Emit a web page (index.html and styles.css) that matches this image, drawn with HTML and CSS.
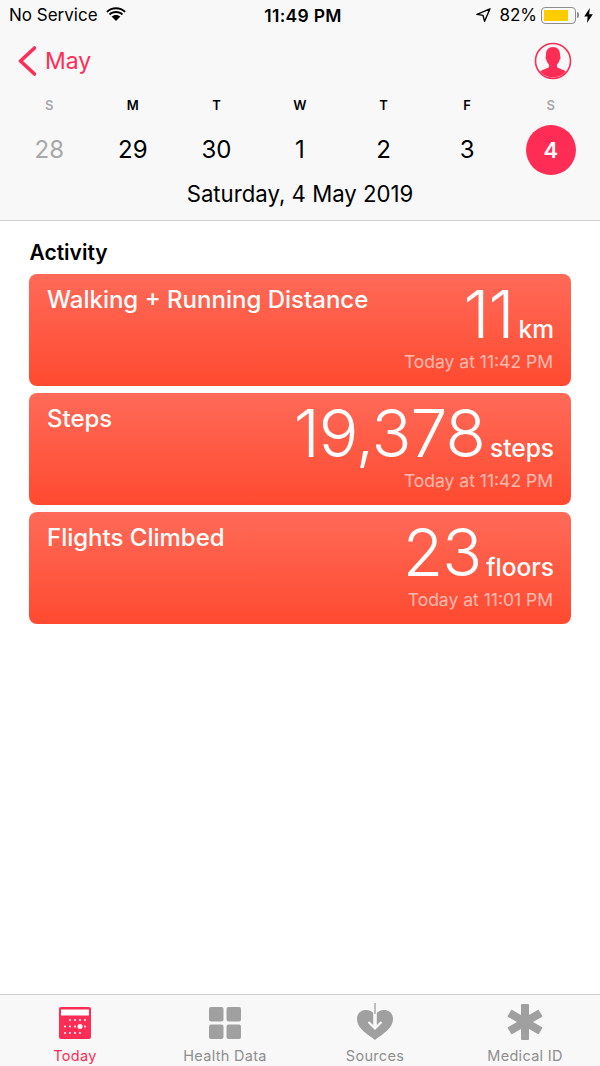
FILE: index.html
```html
<!DOCTYPE html>
<html>
<head>
    <title>Health Today</title>
    <link rel="stylesheet" href="styles.css">
</head>
<body>
    <div class="page">
        <header class="top">
            <div class="status">
                <div class="status-left">
                    <span>No Service</span>
                    <svg class="wifi" width="20" height="14" viewBox="0 0 20 14">
                        <path d="M10 2.200c3.300 0 6.300 1.200 8.600 3.300l1.100-1.300C17 1.700 13.700.3 10 .3S3 1.700.3 4.200l1.100 1.300C3.700 3.400 6.700 2.200 10 2.200z"/>
                        <path d="M10 6c2.300 0 4.300.8 5.900 2.200l1.200-1.400C15.200 5.100 12.700 4.100 10 4.100s-5.200 1-7.100 2.700l1.200 1.400C5.700 6.800 7.700 6 10 6z"/>
                        <path d="M10 7.900c-1.700 0-3.200.6-4.400 1.600L10 14l4.400-4.500c-1.200-1-2.700-1.600-4.400-1.600z"/>
                    </svg>
                </div>
                <div class="clock">11:49 PM</div>
                <div class="status-right">
                    <svg class="arrow" width="15" height="14" viewBox="0 0 15 14">
                        <path d="M14 .8 1 6.400l6 1 1.600 5.900z" fill="none" stroke="#000" stroke-width="1.400" stroke-linejoin="round"/>
                    </svg>
                    <span class="pct">82%</span>
                    <div class="battery"><div class="battery-fill"></div></div>
                    <div class="battery-cap"></div>
                    <svg class="bolt" width="9" height="15" viewBox="0 0 8 14">
                        <path d="M5.200 0 0 8h3.200L2.600 14 8 5.800H4.600z"/>
                    </svg>
                </div>
            </div>
            <div class="nav">
                <div class="back">
                    <svg width="20" height="30" viewBox="0 0 20 30">
                        <path d="M18.500 2 4.500 15l14 13" fill="none" stroke="#ff2d55" stroke-width="3.600" stroke-linecap="round" stroke-linejoin="round"/>
                    </svg>
                    <span>May</span>
                </div>
                <svg class="profile" width="38" height="38" viewBox="0 0 38 38">
                    <defs><clipPath id="ring"><circle cx="19" cy="19" r="16.500"/></clipPath></defs>
                    <circle cx="19" cy="19" r="17.500" fill="none" stroke="#ff2d55" stroke-width="1.600"/>
                    <path clip-path="url(#ring)" d="M19 5c-4.800 0-7 3.300-7 7.200 0 1-.2 2-.3 2.800-.4.300-.3 2.100.6 2.500.4 2.200 1.500 4 2.700 5v2.500c-1.500 1.800-8.500 2.800-9.500 5.500v6h27v-6c-1-2.700-8-3.700-9.500-5.500V22.500c1.200-1 2.300-2.800 2.700-5 .9-.4 1-2.200.6-2.500-.1-.8-.3-1.800-.3-2.800C26 8.300 23.800 5 19 5z" fill="#ff2d55"/>
                </svg>
            </div>
            <div class="week">
                <div class="dow muted">S</div>
                <div class="dow">M</div>
                <div class="dow">T</div>
                <div class="dow">W</div>
                <div class="dow">T</div>
                <div class="dow">F</div>
                <div class="dow muted">S</div>
                <div class="day muted">28</div>
                <div class="day">29</div>
                <div class="day">30</div>
                <div class="day">1</div>
                <div class="day">2</div>
                <div class="day">3</div>
                <div class="day"><span class="today">4</span></div>
            </div>
            <div class="date">Saturday, 4 May 2019</div>
        </header>

        <main class="content">
            <h2 class="section">Activity</h2>

            <div class="card">
                <div class="card-title">Walking + Running Distance</div>
                <div class="card-right">
                    <div class="reading"><span class="num">11</span><span class="unit">km</span></div>
                    <div class="when">Today at 11:42 PM</div>
                </div>
            </div>
            <div class="card">
                <div class="card-title">Steps</div>
                <div class="card-right">
                    <div class="reading"><span class="num">19,378</span><span class="unit">steps</span></div>
                    <div class="when">Today at 11:42 PM</div>
                </div>
            </div>
            <div class="card">
                <div class="card-title">Flights Climbed</div>
                <div class="card-right">
                    <div class="reading"><span class="num">23</span><span class="unit">floors</span></div>
                    <div class="when">Today at 11:01 PM</div>
                </div>
            </div>
        </main>

        <nav class="tabs">
            <div class="tab active">
                <svg width="32" height="32" viewBox="0 0 32 32">
                    <rect x="0" y="0" width="32" height="32" rx="2" fill="#ff2d55"/>
                    <rect x="2" y="2.500" width="28" height="6" fill="#fff"/>
                    <g fill="#fff">
                        <circle cx="11" cy="13" r="1"/><circle cx="16" cy="13" r="1"/><circle cx="21" cy="13" r="1"/><circle cx="26" cy="13" r="1"/>
                        <circle cx="6" cy="19.500" r="1"/><circle cx="11" cy="19.500" r="1"/><circle cx="16" cy="19.500" r="1"/><circle cx="21" cy="19.500" r="2.500"/><circle cx="26" cy="19.500" r="1"/>
                        <circle cx="6" cy="26" r="1"/><circle cx="11" cy="26" r="1"/><circle cx="16" cy="26" r="1"/><circle cx="21" cy="26" r="1"/>
                    </g>
                </svg>
                <span>Today</span>
            </div>
            <div class="tab">
                <svg width="32" height="32" viewBox="0 0 32 32" fill="#a0a0a0">
                    <rect x="0" y="0" width="14.500" height="14.500" rx="2"/>
                    <rect x="17.500" y="0" width="14.500" height="14.500" rx="2"/>
                    <rect x="0" y="17.500" width="14.500" height="14.500" rx="2"/>
                    <rect x="17.500" y="17.500" width="14.500" height="14.500" rx="2"/>
                </svg>
                <span>Health Data</span>
            </div>
            <div class="tab">
                <svg width="38" height="38" viewBox="0 0 38 38" class="tall">
                    <path d="M19 37C13 32 1 26 1 16 1 10 5.500 7 10 7c4 0 7.500 2 9 5 1.500-3 5-5 9-5 4.500 0 9 3 9 9 0 10-12 16-18 21z" fill="#a0a0a0"/>
                    <path d="M19 0v25" stroke="#f8f8f8" stroke-width="3.600" fill="none"/>
                    <path d="M19 0v25" stroke="#a0a0a0" stroke-width="1.300" fill="none" stroke-dasharray="11 30"/>
                    <path d="M12.500 19 19 25.500 25.500 19" fill="none" stroke="#f8f8f8" stroke-width="2.200"/>
                </svg>
                <span>Sources</span>
            </div>
            <div class="tab">
                <svg width="36" height="38" viewBox="0 0 36 38" class="tall" fill="#a0a0a0">
                    <rect x="14" y="1" width="8" height="36" rx="1"/>
                    <rect x="14" y="1" width="8" height="36" rx="1" transform="rotate(60 18 19)"/>
                    <rect x="14" y="1" width="8" height="36" rx="1" transform="rotate(120 18 19)"/>
                </svg>
                <span>Medical ID</span>
            </div>
        </nav>
    </div>
</body>
</html>
```

FILE: styles.css
```css
* {
    box-sizing: border-box;
}

body {
    margin: 0;
    font-family: Inter, "Noto Sans", "Liberation Sans", sans-serif;
    color: #000;
    background: #fff;
}

.page {
    width: 600px;
    height: 1066px;
    display: flex;
    flex-direction: column;
    overflow: hidden;
}

.top {
    height: 221px;
    background: #f8f8f8;
    border-bottom: 1px solid #d0d0d0;
}

.status {
    height: 30px;
    padding: 0 7px 0 9px;
    display: flex;
    align-items: center;
    justify-content: space-between;
    font-size: 17px;
    position: relative;
}

.status-left {
    display: flex;
    align-items: center;
    gap: 8px;
}

.wifi {
    fill: #000;
    margin-top: -3px;
}

.clock {
    position: absolute;
    left: 6px;
    right: 0;
    text-align: center;
    font-size: 17.500px;
    font-weight: 600;
    letter-spacing: 0.300px;
}

.status-right {
    display: flex;
    align-items: center;
}

.arrow {
    margin-right: 8px;
}

.pct {
    margin-right: 4px;
}

.battery {
    width: 35px;
    height: 17px;
    border: 1.500px solid #8e8e8e;
    border-radius: 4px;
    padding: 2px;
}

.battery-fill {
    width: 82%;
    height: 100%;
    background: #ffcc00;
}

.battery-cap {
    width: 2px;
    height: 6px;
    margin: 0 5px 0 1px;
    background: #8e8e8e;
    border-radius: 0 2px 2px 0;
}

.nav {
    height: 62px;
    padding: 0 28px 0 16px;
    display: flex;
    align-items: center;
    justify-content: space-between;
}

.back {
    display: flex;
    align-items: center;
    gap: 9px;
    color: #ff2d55;
    font-size: 23px;
}

.week {
    padding: 3px 7.500px 0;
    display: grid;
    grid-template-columns: repeat(7, 1fr);
    grid-template-rows: 20px 50px;
    row-gap: 10px;
    text-align: center;
}

.dow {
    font-size: 13px;
    font-weight: 600;
    line-height: 20px;
}

.day {
    font-size: 24px;
    line-height: 50px;
    display: flex;
    justify-content: center;
}

.muted {
    color: #a8a8a8;
}

.today {
    width: 50px;
    height: 50px;
    border-radius: 50%;
    background: #ff2d55;
    color: #fff;
    font-size: 22px;
    font-weight: 600;
}

.date {
    margin-top: 3px;
    text-align: center;
    font-size: 22.200px;
    line-height: 32px;
}

.content {
    flex: 1;
    padding: 0 29px;
}

.section {
    margin: 18px 0 8px 0.500px;
    font-size: 21px;
    font-weight: 600;
    line-height: 27px;
}

.card {
    height: 112px;
    margin-bottom: 7px;
    padding: 11px 17px 0 18px;
    display: flex;
    justify-content: space-between;
    border-radius: 8px;
    color: #fff;
    background: linear-gradient(#ff6a58, #ff4a30);
}

.card-title {
    font-size: 24px;
    font-weight: 500;
    line-height: 30px;
}

.card-right {
    text-align: right;
}

.reading {
    display: flex;
    justify-content: flex-end;
    align-items: baseline;
    gap: 5px;
    height: 56px;
    margin-top: 1px;
    line-height: 56px;
}

.num {
    font-size: 66px;
    font-weight: 300;
    letter-spacing: -1px;
}

.unit {
    font-size: 24.500px;
    font-weight: 500;
}

.when {
    margin: 9px 1px 0 0;
    font-size: 17.500px;
    line-height: 22px;
    color: rgba(255, 255, 255, 0.62);
}

.tabs {
    height: 72px;
    background: #f8f8f8;
    border-top: 1px solid #d0d0d0;
    display: grid;
    grid-template-columns: repeat(4, 1fr);
}

.tab {
    display: flex;
    flex-direction: column;
    align-items: center;
    padding-top: 12px;
    color: #8e8e8e;
    font-size: 14.500px;
    letter-spacing: 0.300px;
}

.tab svg {
    height: 32px;
    margin-bottom: 8px;
    flex: none;
}

.tab svg.tall {
    height: 38px;
    margin-top: -4px;
    margin-bottom: 6px;
}

.tab.active {
    color: #ff2d55;
}
```
